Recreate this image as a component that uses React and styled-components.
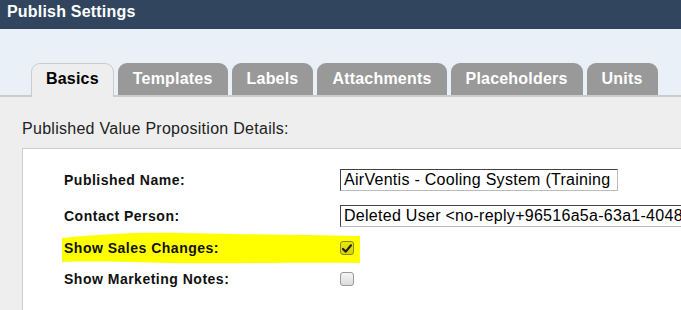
import React from 'react'
import styled, { createGlobalStyle } from 'styled-components'

const GlobalStyle = createGlobalStyle`
  html, body {
    margin: 0;
    padding: 0;
    background: #eeeeee;
    font-family: "Liberation Sans", Arial, sans-serif;
    overflow: hidden;
  }
`

const Page = styled.div`
  width: 681px;
  height: 310px;
  overflow: hidden;
  background: #eeeeee;
`

const TitleBar = styled.div`
  height: 29px;
  background: #31465e;
  color: #ffffff;
  font-size: 16px;
  font-weight: bold;
  line-height: 18px;
  letter-spacing: 0.2px;
  padding: 3px 0 0 7px;
  box-sizing: border-box;
`

const TabArea = styled.div`
  background: #eaf0f8;
  height: 68px;
  box-sizing: border-box;
  display: flex;
  align-items: flex-end;
  gap: 4px;
  padding-left: 31px;
  border-bottom: 2px solid #cccccc;
`

const Tab = styled.div`
  height: ${p => (p.$active ? '34px' : '32px')};
  margin-bottom: ${p => (p.$active ? '-2px' : '0')};
  box-sizing: border-box;
  padding: ${p => (p.$active ? '6px 14px 0' : '7px 15px 0')};
  font-size: 16px;
  font-weight: bold;
  line-height: 18px;
  letter-spacing: 0.2px;
  border-radius: 9px 9px 0 0;
  background: ${p => (p.$active ? '#eeeeee' : '#999999')};
  color: ${p => (p.$active ? '#000000' : '#ffffff')};
  border: ${p => (p.$active ? '1px solid #cccccc' : 'none')};
  border-bottom: none;
`

const Content = styled.div`
  padding: 23px 0 0 22px;
`

const SectionTitle = styled.div`
  font-size: 16px;
  line-height: 18px;
  letter-spacing: 0.28px;
  color: #222222;
  margin-bottom: 10px;
`

const Box = styled.div`
  background: #ffffff;
  border: 1px solid #cccccc;
  border-right: none;
  height: 200px;
  padding: 20px 0 0 41px;
`

const Row = styled.div`
  position: relative;
  display: grid;
  grid-template-columns: 276px 1fr;
  align-items: center;
  height: 22px;
  margin-top: ${p => p.$top || 0}px;
`

const Label = styled.div`
  position: relative;
  font-size: 14px;
  font-weight: bold;
  letter-spacing: 0.5px;
  color: #111111;
  white-space: nowrap;
`

const TextInput = styled.div`
  position: relative;
  width: ${p => p.$width}px;
  height: 22px;
  box-sizing: border-box;
  border: 1px solid;
  border-color: #444444 #bbbbbb #bbbbbb #444444;
  font-size: 16px;
  line-height: 19px;
  letter-spacing: 0.28px;
  padding-left: 3px;
  color: #000000;
  white-space: nowrap;
  overflow: hidden;
`

const CheckBox = styled.div`
  position: relative;
  width: 14px;
  height: 14px;
  box-sizing: border-box;
  border: 1px solid ${p => (p.$checked ? '#8a8a20' : '#9a9a9a')};
  border-radius: 3px;
  background: ${p =>
    p.$checked
      ? 'linear-gradient(#e8e800, #d4d400)'
      : 'linear-gradient(#f4f4f4, #dcdcdc)'};
  display: flex;
  align-items: center;
  justify-content: center;
`

const Highlight = styled.svg`
  position: absolute;
  left: -4px;
  top: -5px;
  width: 302px;
  height: 32px;
`

const CheckMark = () => (
  <svg width="10" height="9" viewBox="0 0 10 9">
    <path d="M1 5 L3.8 7.6 L9 1.3" stroke="#222" strokeWidth="2.2" fill="none" strokeLinecap="round" strokeLinejoin="round" />
  </svg>
)

const tabs = ['Basics', 'Templates', 'Labels', 'Attachments', 'Placeholders', 'Units']

export default function App() {
  return (
    <Page>
      <GlobalStyle />
      <TitleBar>Publish Settings</TitleBar>
      <TabArea>
        {tabs.map((t, i) => (
          <Tab key={t} $active={i === 0}>{t}</Tab>
        ))}
      </TabArea>
      <Content>
        <SectionTitle>Published Value Proposition Details:</SectionTitle>
        <Box>
          <Row>
            <Label>Published Name:</Label>
            <TextInput $width={278}>AirVentis - Cooling System (Training</TextInput>
          </Row>
          <Row $top={14}>
            <Label>Contact Person:</Label>
            <TextInput $width={420}>Deleted User &lt;no-reply+96516a5a-63a1-4048</TextInput>
          </Row>
          <Row $top={10}>
            <Highlight viewBox="0 0 302 32">
              <path
                d="M2 6 C40 2 80 0 120 1 C170 2 240 3 300 4 L300 31 C240 30 170 32 110 31 C70 30 30 29 2 30 Z"
                fill="#ffff00"
              />
            </Highlight>
            <Label>Show Sales Changes:</Label>
            <CheckBox $checked>
              <CheckMark />
            </CheckBox>
          </Row>
          <Row $top={9}>
            <Label>Show Marketing Notes:</Label>
            <CheckBox />
          </Row>
        </Box>
      </Content>
    </Page>
  )
}
